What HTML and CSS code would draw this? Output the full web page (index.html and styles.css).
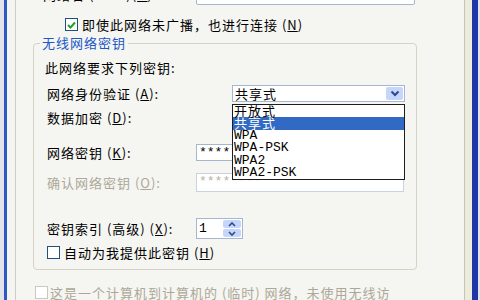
FILE: index.html
```html
<!DOCTYPE html>
<html lang="zh-CN">
<head>
  <meta charset="UTF-8">
  <title>无线网络属性</title>
  <link rel="stylesheet" href="styles.css">
</head>
<body>
  <div class="window">
    <div class="frame">
      <div class="page">

        <div class="ssid-row">
          <span class="ssid-label">网络名 (SSID)(<u>N</u>):</span>
          <div class="textbox ssid-box"></div>
        </div>

        <div class="check-row broadcast">
          <span class="box checked">
            <svg width="9" height="8" viewBox="0 0 9 8"><path d="M1 4 L3.5 6.5 L8 1.5" fill="none" stroke="#21a121" stroke-width="2"/></svg>
          </span>
          <span>即使此网络未广播，也进行连接 (<u>N</u>)</span>
        </div>

        <fieldset class="group">
          <legend>无线网络密钥</legend>
          <p class="desc">此网络要求下列密钥:</p>

          <div class="field auth-row">
            <span class="lbl">网络身份验证 (<u>A</u>):</span>
            <div class="select">
              <span class="select-value">共享式</span>
              <span class="select-arrow">
                <svg width="10" height="7" viewBox="0 0 10 7"><path d="M1.5 1.5 L5 5 L8.5 1.5" fill="none" stroke="#2a4a8a" stroke-width="2"/></svg>
              </span>
              <ul class="dropdown">
                <li>开放式</li>
                <li class="selected">共享式</li>
                <li class="latin">WPA</li>
                <li class="latin">WPA-PSK</li>
                <li class="latin">WPA2</li>
                <li class="latin">WPA2-PSK</li>
              </ul>
            </div>
          </div>

          <div class="field enc-row">
            <span class="lbl">数据加密 (<u>D</u>):</span>
          </div>

          <div class="field key-row">
            <span class="lbl">网络密钥 (<u>K</u>):</span>
            <div class="textbox keybox">********</div>
          </div>

          <div class="field confirm-row disabled">
            <span class="lbl">确认网络密钥 (<u>O</u>):</span>
            <div class="textbox keybox">********</div>
          </div>

          <div class="field index-row">
            <span class="lbl">密钥索引 (高级) (<u>X</u>):</span>
            <div class="spin">
              <span class="spin-value">1</span>
              <span class="spin-buttons">
                <span class="spin-btn"><svg width="8" height="5" viewBox="0 0 8 5"><path d="M1 4 L4 1 L7 4" fill="none" stroke="#2a4a8a" stroke-width="1.6"/></svg></span>
                <span class="spin-btn"><svg width="8" height="5" viewBox="0 0 8 5"><path d="M1 1 L4 4 L7 1" fill="none" stroke="#2a4a8a" stroke-width="1.6"/></svg></span>
              </span>
            </div>
          </div>

          <div class="check-row auto-key">
            <span class="box"></span>
            <span>自动为我提供此密钥 (<u>H</u>)</span>
          </div>
        </fieldset>

        <div class="check-row adhoc disabled">
          <span class="box"></span>
          <span>这是一个计算机到计算机的 (临时) 网络，未使用无线访</span>
        </div>

      </div>
    </div>
  </div>
</body>
</html>
```

FILE: styles.css
```css
body {
  margin: 0;
  width: 480px;
  height: 300px;
  overflow: hidden;
  background-color: #e4e4de;
  font-family: "Noto Sans CJK SC", "Liberation Sans", sans-serif;
  font-size: 13px;
  letter-spacing: 1px;
  color: #000;
}
u {
  text-decoration: underline;
  text-underline-offset: 1px;
}
.window {
  display: flex;
  height: 300px;
  padding: 0 4px;
  background-color: #e2e2ea;
}
.frame {
  display: flex;
  flex: 1;
  border-left: 3px solid #3157c0;
  border-right: 6px solid #1f36a6;
  background-color: #ecebdc;
  padding-left: 8px;
  padding-right: 7px;
  background-image: linear-gradient(to right, #f4f4f0 8px, #ecebdc 8px);
}
.page {
  flex: 1;
  border-left: 1px solid #cdcdc4;
  border-right: 1px solid #c4c4b8;
  background-color: #f5f5f1;
  padding: 0 47px 0 17px;
  overflow: hidden;
}

/* top ssid row, mostly scrolled off */
.ssid-row {
  display: flex;
  align-items: center;
  margin-top: -16px;
  height: 21px;
}
.ssid-label {
  width: 153px;
  padding-left: 10px;
}
.textbox {
  box-sizing: border-box;
  background-color: #fff;
  border: 1px solid #a5b7cf;
  font-family: "Liberation Mono", monospace;
  letter-spacing: 0;
  padding-left: 2px;
}
.ssid-box {
  width: 219px;
  height: 21px;
  border-radius: 2px;
}

/* checkboxes */
.check-row {
  display: flex;
  align-items: center;
  height: 13px;
  line-height: 13px;
}
.box {
  box-sizing: border-box;
  display: flex;
  align-items: center;
  justify-content: center;
  width: 13px;
  height: 13px;
  border: 1px solid #1c5180;
  background-color: #fff;
  margin-right: 4px;
}
.broadcast {
  margin-top: 13px;
  padding-left: 32px;
}
.auto-key {
  margin-top: 7px;
  padding-left: 2px;
}
.adhoc {
  margin-top: 16px;
  padding-left: 2px;
}
.adhoc .box {
  border-color: #cac8bb;
  margin-right: 2px;
}
.disabled {
  color: #aca899;
}

/* group box */
.group {
  box-sizing: border-box;
  width: 382px;
  margin: 5px 0 0 0;
  padding: 0 11px 10px 11px;
  border: 1px solid #d4d3c6;
  border-radius: 4px;
}
.group legend {
  color: #2156c7;
  padding: 0 2px;
  margin-left: -5px;
  line-height: 14px;
}
.desc {
  margin: 11px 0 0 0;
  line-height: 14px;
}
.field {
  display: flex;
  align-items: center;
  padding-left: 2px;
}
.lbl {
  width: 149px;
  flex-shrink: 0;
}
.auth-row {
  margin-top: 10px;
  height: 17px;
}
.enc-row {
  margin-top: 7px;
  height: 17px;
}
.key-row {
  margin-top: 18px;
  height: 17px;
}
.confirm-row {
  margin-top: 12px;
  height: 19px;
}
.index-row {
  margin-top: 26px;
  height: 21px;
}
.keybox {
  width: 208px;
  height: 100%;
  line-height: 16px;
}
.confirm-row .keybox {
  border-color: #c9d3df;
  color: #b5b3a6;
}

/* select and its open list */
.select {
  position: relative;
  box-sizing: border-box;
  display: flex;
  align-items: center;
  justify-content: space-between;
  width: 173px;
  height: 17px;
  margin-left: 36px;
  border: 1px solid #a5b7cf;
  background-color: #fff;
}
.select-value {
  padding-left: 2px;
}
.select-arrow {
  display: flex;
  align-items: center;
  justify-content: center;
  width: 17px;
  height: 13px;
  margin-right: 1px;
  border-radius: 2px;
  background-color: #c6d5fa;
}
.dropdown {
  position: absolute;
  z-index: 2;
  top: 18px;
  left: -1px;
  box-sizing: border-box;
  width: 173px;
  margin: 0;
  padding: 0;
  list-style: none;
  background-color: #fff;
  border: 1px solid #1e1e1e;
}
.dropdown li {
  height: 12.4px;
  line-height: 12.4px;
  padding-left: 1px;
}
.dropdown .latin {
  font-family: "Liberation Mono", monospace;
  letter-spacing: 0;
}
.dropdown .selected {
  background-color: #316ac5;
  color: #fff;
}

/* spin box */
.spin {
  box-sizing: border-box;
  display: flex;
  justify-content: space-between;
  width: 47px;
  height: 21px;
  border: 1px solid #a5b7cf;
  background-color: #fff;
}
.spin-value {
  font-family: "Liberation Mono", monospace;
  letter-spacing: 0;
  line-height: 19px;
  padding-left: 2px;
}
.spin-buttons {
  display: flex;
  flex-direction: column;
  width: 18px;
  padding: 1px;
  gap: 1px;
}
.spin-btn {
  flex: 1;
  display: flex;
  align-items: center;
  justify-content: center;
  background-color: #c6d5fa;
  border-radius: 2px;
}
```
